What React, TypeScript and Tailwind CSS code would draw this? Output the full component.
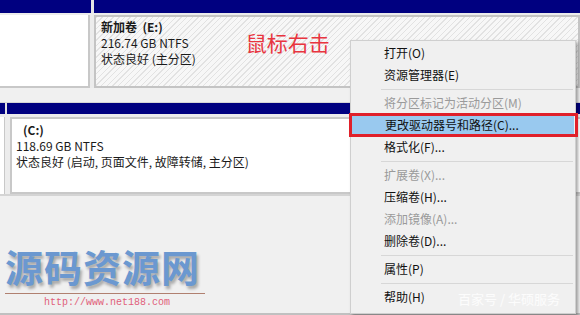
const NAVY = 'bg-[#000080]'

type MenuEntry = { label: string; disabled?: boolean; active?: boolean } | 'sep'

const MENU: MenuEntry[] = [
    { label: '打开(O)' },
    { label: '资源管理器(E)' },
    'sep',
    { label: '将分区标记为活动分区(M)', disabled: true },
    { label: '更改驱动器号和路径(C)...', active: true },
    { label: '格式化(F)...' },
    'sep',
    { label: '扩展卷(X)...', disabled: true },
    { label: '压缩卷(H)...' },
    { label: '添加镜像(A)...', disabled: true },
    { label: '删除卷(D)...' },
    'sep',
    { label: '属性(P)' },
    'sep',
    { label: '帮助(H)' },
]

const hatch =
    'bg-[repeating-linear-gradient(135deg,#e2e2e2_0px,#e2e2e2_1px,#f7f7f7_1px,#f7f7f7_4px)]'

function ContextMenu() {
    return (
        <div className="absolute left-[350px] top-[40px] w-[226px] h-[274px] bg-[#f0f0f0] border border-[#cfcfcf] shadow-[2px_2px_3px_rgba(0,0,0,0.35)] pt-[1px]">
            {MENU.map((item, i) =>
                item === 'sep' ? (
                    <div key={i} className="h-[6px] flex items-center pl-[30px] pr-[2px]">
                        <div className="h-px w-full bg-[#d7d7d7]" />
                    </div>
                ) : (
                    <div
                        key={i}
                        className={`h-[22px] flex items-center pl-[33px] text-[12px] ${
                            item.active ? 'bg-[#99c9ef] mx-[1px] pl-[32px]' : ''
                        } ${item.disabled ? 'text-[#9a9a9a]' : 'text-[#111]'}`}
                    >
                        {item.label}
                    </div>
                ),
            )}
        </div>
    )
}

export default function App() {
    return (
        <div className="relative w-[580px] h-[315px] overflow-hidden bg-[#f0f0f0] font-['Segoe_UI','Noto_Sans_CJK_SC',sans-serif] text-[#1a1a1a]">
            {/* top disk row */}
            <div className="flex h-[13px]">
                <div className={`w-[91px] ${NAVY}`} />
                <div className="w-[3px] bg-[#e4e4e4]" />
                <div className={`flex-1 ${NAVY}`} />
            </div>
            <div className="flex h-[75px] pt-[2px] bg-[#ececec]">
                <div className="w-[90px] bg-white border-r-[2px] border-b-[2px] border-[#c8c8c8]" />
                <div className="w-[3px]" />
                <div className={`flex-1 ml-[1px] border-[2px] border-[#c4c4c4] ${hatch} pl-[5px] pt-[2px] text-[12px] leading-[16px] flex`}>
                    <div>
                        <div className="font-bold">新加卷&nbsp; (E:)</div>
                        <div>216.74 GB NTFS</div>
                        <div>状态良好 (主分区)</div>
                    </div>
                    <div className="ml-[50px] mt-[11px] text-[21px] leading-[24px] text-[#e8353f]">鼠标右击</div>
                </div>
            </div>

            <div className="h-[15px] bg-[#f0f0f0] border-b border-[#d6d6d6]" />

            {/* system disk row */}
            <div className="flex h-[11px]">
                <div className={`w-[5px] ${NAVY}`} />
                <div className="w-[2px] bg-[#e4e4e4]" />
                <div className={`flex-1 ${NAVY}`} />
            </div>
            <div className="flex h-[80px] pt-[3px] bg-[#ececec]">
                <div className="w-[5px] bg-white border-r border-[#c8c8c8]" />
                <div className="w-[5px]" />
                <div className="flex-1 bg-white border-l-[2px] border-t-[2px] border-b-[2px] border-[#c8c8c8] pl-[4px] pt-[3px] text-[12px] leading-[16px]">
                    <div className="font-bold pl-[7px]">(C:)</div>
                    <div>118.69 GB NTFS</div>
                    <div>状态良好 (启动, 页面文件, 故障转储, 主分区)</div>
                </div>
            </div>
            <div className="h-[2px] bg-[#d4d4d4]" />

            {/* watermark */}
            <div className="absolute left-[5px] top-[244px] w-[200px]">
                <div className="text-[38px] leading-[44px] font-bold tracking-[1px] text-[#6b98d0] font-['Noto_Sans_CJK_SC',sans-serif] [text-shadow:2px_3px_3px_rgba(0,0,0,0.3)]">
                    源码资源网
                </div>
                <div className="h-px mt-[5px] bg-[#b08070]" />
                <div className="pl-[39px] mt-[2px] text-[10px] leading-[14px] text-[#e0607a] font-['Liberation_Mono',monospace]">
                    http://www.net188.com
                </div>
            </div>
            <div className="absolute left-0 right-0 top-[313px] h-[2px] bg-[#c0c0c0]" />

            <ContextMenu />

            <div className="absolute left-[349px] top-[113px] w-[229px] h-[24px] border-[3px] border-[#e0202a]" />

            <div className="absolute left-[458px] top-[289px] text-[13px] text-white/80 font-['Noto_Sans_CJK_SC',sans-serif]">
                百家号 / 华硕服务
            </div>
        </div>
    )
}
